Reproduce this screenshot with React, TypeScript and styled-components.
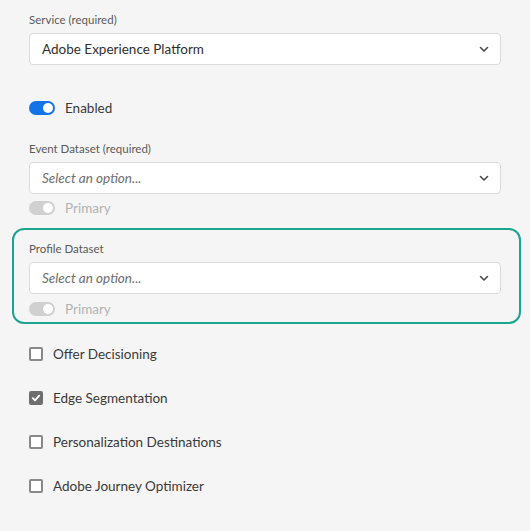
import * as React from 'react';
import styled, { createGlobalStyle } from 'styled-components';

const GlobalStyle = createGlobalStyle`
    html, body {
        margin: 0;
        padding: 0;
        background: #f5f5f5;
    }
    body {
        font-family: Lato, "Open Sans", "Liberation Sans", sans-serif;
        color: #4b4b4b;
    }
`;

const Page = styled.div`
    width: 530px;
    height: 531px;
    box-sizing: border-box;
    padding: 13px 29px 0 29px;
    display: flex;
    flex-direction: column;
`;

const Field = styled.div<{ $top?: number }>`
    display: flex;
    flex-direction: column;
    margin-top: ${p => p.$top || 0}px;
`;

const Label = styled.div`
    font-size: 11.5px;
    line-height: 14px;
    color: #5a5a5a;
    margin-bottom: 6px;
`;

const SelectBox = styled.div`
    height: 32px;
    box-sizing: border-box;
    border: 1px solid #dadada;
    border-radius: 4px;
    background: #ffffff;
    display: flex;
    align-items: center;
    justify-content: space-between;
    padding: 0 11px 0 12px;
`;

const SelectText = styled.span<{ $placeholder?: boolean }>`
    font-size: 13.5px;
    color: ${p => (p.$placeholder ? '#6e6e6e' : '#2f2f2f')};
    font-style: ${p => (p.$placeholder ? 'italic' : 'normal')};
`;

const ToggleRow = styled.div<{ $disabled?: boolean; $top?: number }>`
    display: flex;
    align-items: center;
    gap: 10px;
    height: 20px;
    margin-top: ${p => p.$top || 0}px;
    font-size: 13.5px;
    color: ${p => (p.$disabled ? '#b3b3b3' : '#3a3a3a')};
`;

const Track = styled.div<{ $disabled?: boolean }>`
    width: 26px;
    height: 14px;
    border-radius: 7px;
    background: ${p => (p.$disabled ? '#d0d0d0' : '#1473e6')};
    position: relative;
    flex: none;
`;

const Knob = styled.div`
    position: absolute;
    right: 2px;
    top: 2px;
    width: 10px;
    height: 10px;
    border-radius: 50%;
    background: #ffffff;
`;

const Highlight = styled.div`
    margin: 10px -20px 0 -17px;
    border: 2px solid #1aa591;
    border-radius: 12px;
    padding: 12px 18px 3px 15px;
    display: flex;
    flex-direction: column;
`;

const CheckList = styled.div`
    display: flex;
    flex-direction: column;
    gap: 24px;
    margin-top: 20px;
`;

const CheckRow = styled.div`
    display: flex;
    align-items: center;
    gap: 10px;
    height: 20px;
    font-size: 13.5px;
    color: #3a3a3a;
`;

const Box = styled.div<{ $checked?: boolean }>`
    width: 14px;
    height: 14px;
    box-sizing: border-box;
    border-radius: 2px;
    border: 2px solid ${p => (p.$checked ? '#6e6e6e' : '#8a8a8a')};
    background: ${p => (p.$checked ? '#6e6e6e' : '#ffffff')};
    display: flex;
    align-items: center;
    justify-content: center;
    flex: none;
`;

const Chevron = () => (
    <svg width="10" height="10" viewBox="0 0 10 10">
        <path d="M1.5 3.5 L5 7 L8.5 3.5" fill="none" stroke="#4b4b4b" strokeWidth="1.6" strokeLinecap="round" strokeLinejoin="round" />
    </svg>
);

const Select: React.FC<{ value?: string }> = ({ value }) => (
    <SelectBox>
        <SelectText $placeholder={!value}>{value || 'Select an option...'}</SelectText>
        <Chevron />
    </SelectBox>
);

const Toggle: React.FC<{ label: string; disabled?: boolean; top?: number }> = ({ label, disabled, top }) => (
    <ToggleRow $disabled={disabled} $top={top}>
        <Track $disabled={disabled}>
            <Knob />
        </Track>
        {label}
    </ToggleRow>
);

const Checkbox: React.FC<{ label: string; checked?: boolean }> = ({ label, checked }) => (
    <CheckRow>
        <Box $checked={checked}>
            {checked && (
                <svg width="10" height="10" viewBox="0 0 10 10">
                    <path d="M1.8 5.2 L4 7.4 L8.2 2.6" fill="none" stroke="#ffffff" strokeWidth="1.8" strokeLinecap="round" strokeLinejoin="round" />
                </svg>
            )}
        </Box>
        {label}
    </CheckRow>
);

const App: React.FC = () => (
    <>
        <GlobalStyle />
        <Page>
            <Field>
                <Label>Service (required)</Label>
                <Select value="Adobe Experience Platform" />
            </Field>
            <Toggle label="Enabled" top={33} />
            <Field $top={24}>
                <Label>Event Dataset (required)</Label>
                <Select />
            </Field>
            <Toggle label="Primary" disabled top={4} />
            <Highlight>
                <Field>
                    <Label>Profile Dataset</Label>
                    <Select />
                </Field>
                <Toggle label="Primary" disabled top={5} />
            </Highlight>
            <CheckList>
                <Checkbox label="Offer Decisioning" />
                <Checkbox label="Edge Segmentation" checked />
                <Checkbox label="Personalization Destinations" />
                <Checkbox label="Adobe Journey Optimizer" />
            </CheckList>
        </Page>
    </>
);

export default App;
